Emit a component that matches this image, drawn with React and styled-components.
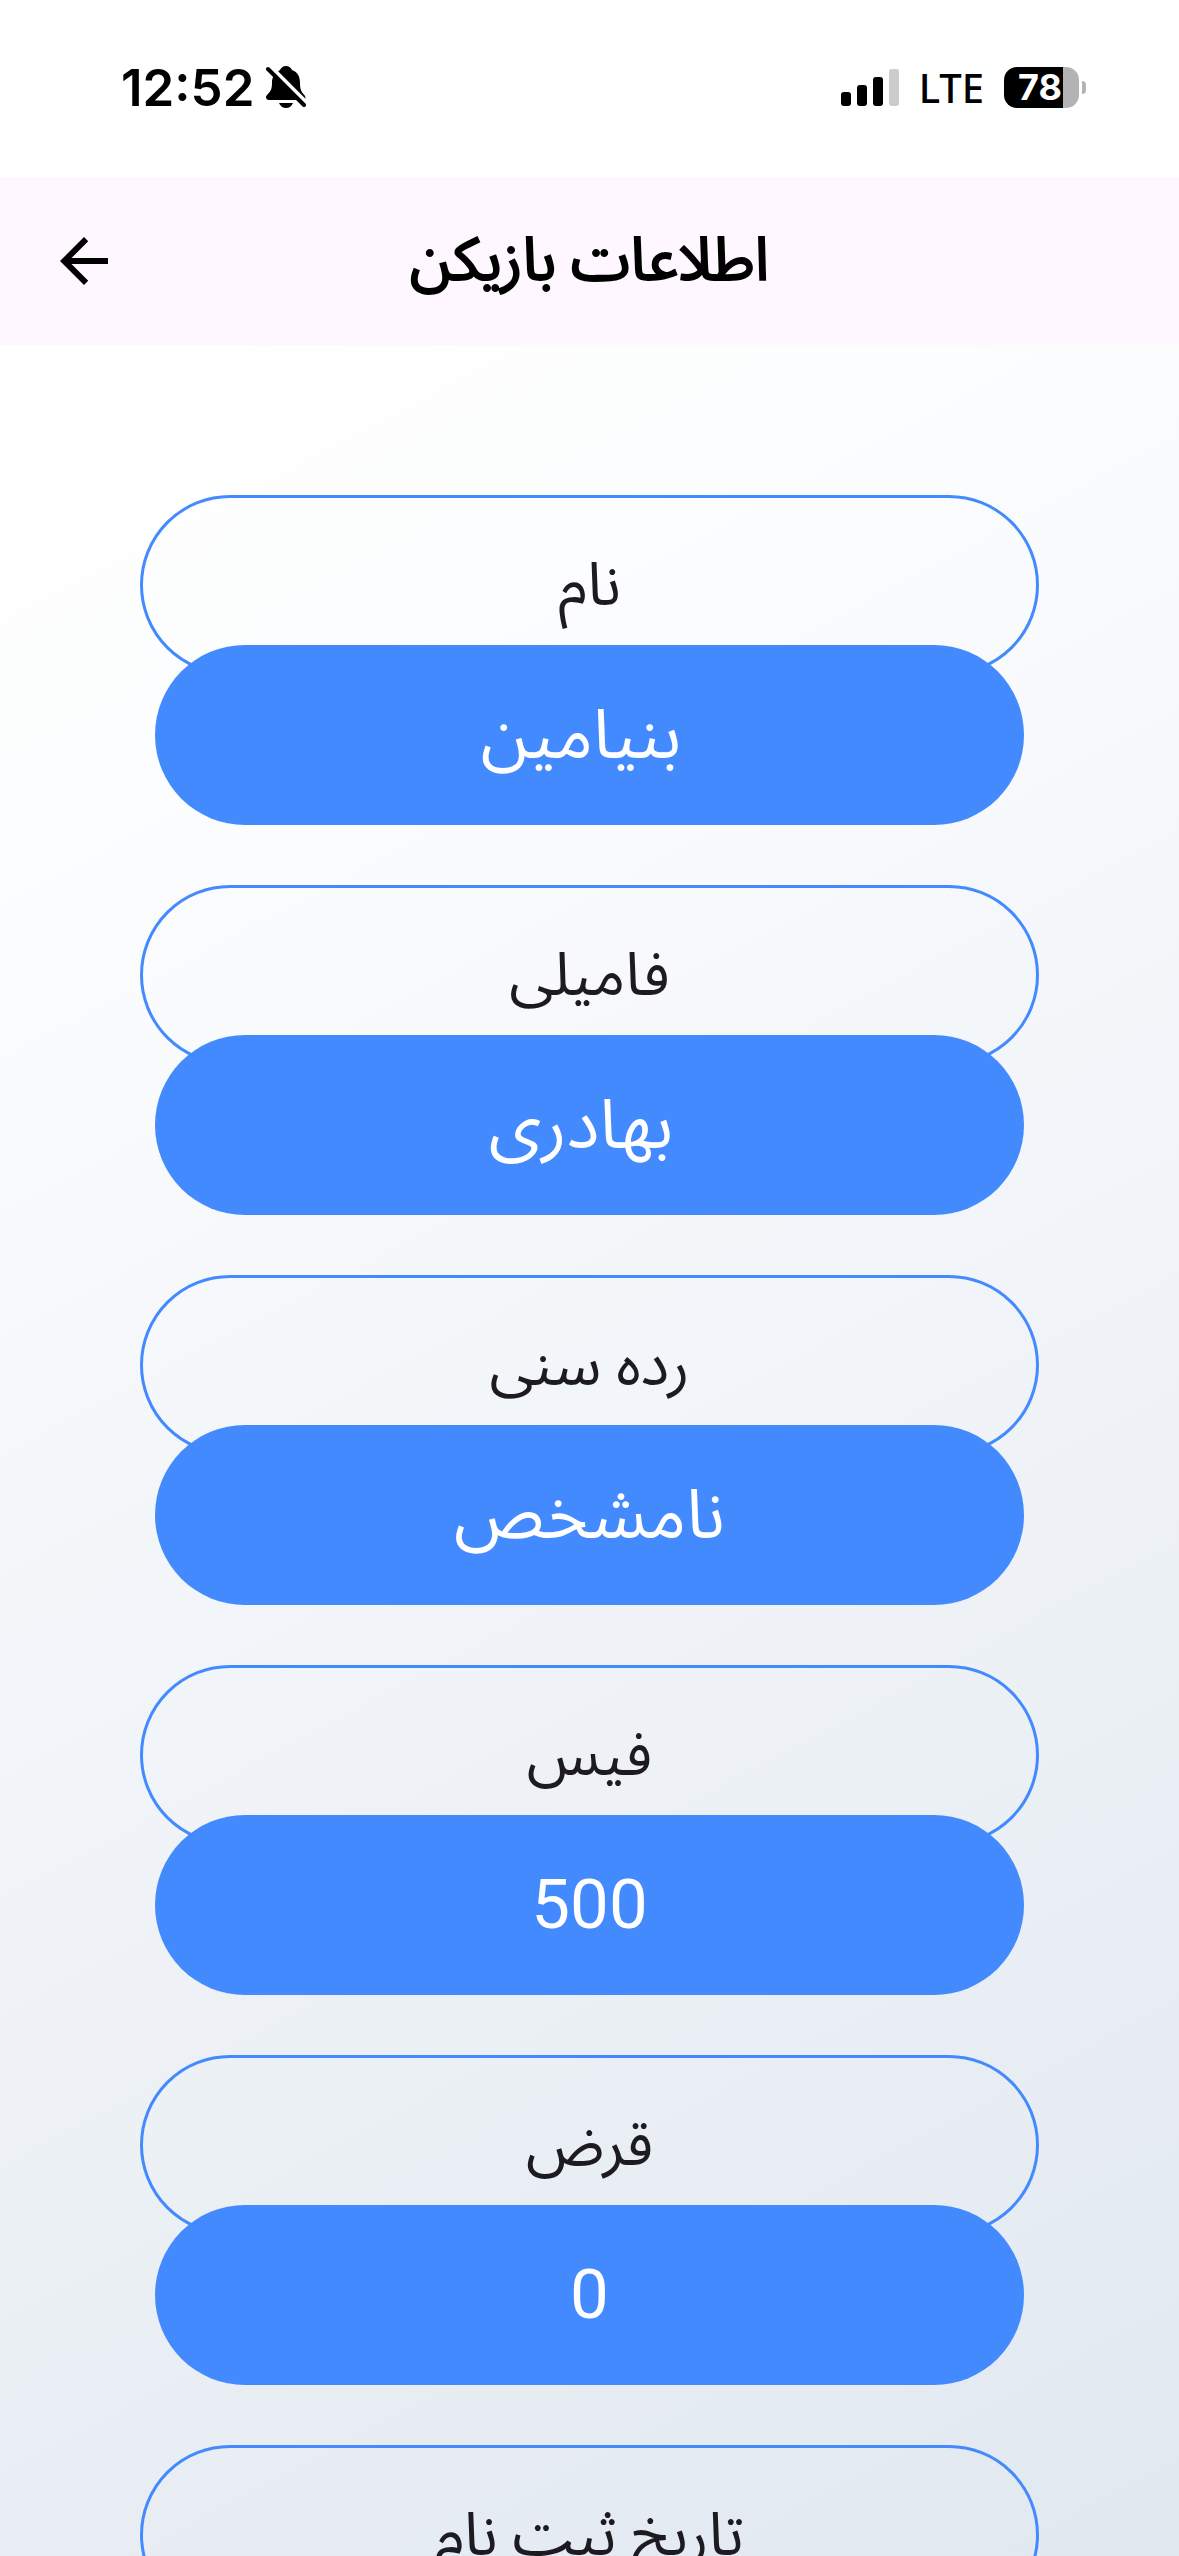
import styled, { createGlobalStyle } from "styled-components";

const fields = [
  { label: "نام", value: " بنیامین" },
  { label: "فامیلی", value: " بهادری" },
  { label: "رده سنی", value: "نامشخص" },
  { label: "فیس", value: "500" },
  { label: "قرض", value: "0" },
  { label: "تاریخ ثبت نام", value: "" },
];

const GlobalStyle = createGlobalStyle`
  * {
    box-sizing: border-box;
  }
  html, body, #root {
    height: 100%;
    margin: 0;
  }
  body {
    font-family: Roboto, "Noto Sans Arabic", "DejaVu Sans", sans-serif;
    background-color: #ffffff;
  }
`;

const BellOff = () => (
  <svg width="40" height="43" viewBox="0 0 40 43" aria-label="silent">
    <path
      d="M20 0c3 0 5 2 6 4 6 2 8 7 8 13 0 8 2 9 5 13 1 3 0 4-2 4H3c-3 0-4-3-2-5 4-4 5-6 5-13C6 11 9 7 14 4c1-2 3-4 6-4z"
      fill="#000"
    />
    <path d="M13 37h14c-1 3-4 5-7 5s-6-2-7-5z" fill="#000" />
    <path d="M4 0l38 38" stroke="#fff" strokeWidth="4" />
    <path d="M2 3l36 36" stroke="#000" strokeWidth="4" strokeLinecap="round" />
  </svg>
);

const Signal = () => (
  <svg width="58" height="38" viewBox="0 0 58 38" aria-label="signal">
    <rect x="0" y="23" width="10" height="14" rx="3" />
    <rect x="16" y="16" width="10" height="21" rx="3" />
    <rect x="32" y="8" width="10" height="29" rx="3" />
    <rect x="48" y="0" width="10" height="37" rx="3" fill="#cccccc" />
  </svg>
);

const ArrowBack = () => (
  <svg width="72" height="72" viewBox="0 0 24 24" aria-hidden="true">
    <path d="M20 11H7.83l5.59-5.59L12 4l-8 8 8 8 1.41-1.41L7.83 13H20v-2z" />
  </svg>
);

export default function App() {
  return (
    <Screen>
      <GlobalStyle />
      <StatusBar>
        <StatusGroup $gap={12}>
          <Clock>12:52</Clock>
          <BellOff />
        </StatusGroup>
        <StatusGroup $gap={20}>
          <Signal />
          <Network>LTE</Network>
          <BatteryWrapper>
            <Battery>78</Battery>
            <BatteryTip />
          </BatteryWrapper>
        </StatusGroup>
      </StatusBar>
      <AppBar>
        <BackButton type="button" aria-label="بازگشت">
          <ArrowBack />
        </BackButton>
        <Title dir="rtl">اطلاعات بازیکن</Title>
      </AppBar>
      <Content dir="rtl">
        {fields.map(({ label, value }) => (
          <Field key={label}>
            <FieldLabel>{label}</FieldLabel>
            <FieldValue>{value}</FieldValue>
          </Field>
        ))}
      </Content>
    </Screen>
  );
}

const Screen = styled.div`
  display: flex;
  flex-direction: column;
  height: 100vh;
`;

const StatusBar = styled.div`
  display: flex;
  justify-content: space-between;
  align-items: center;
  flex: none;
  height: 177px;
  padding: 0 93px 2px 121px;
  font-family: Inter, sans-serif;
`;

const StatusGroup = styled.div`
  display: flex;
  align-items: center;
  gap: ${({ $gap }) => $gap}px;
`;

const Clock = styled.span`
  font-size: 51px;
  font-weight: 600;
`;

const Network = styled.span`
  font-family: "Noto Sans", sans-serif;
  font-size: 40px;
  font-weight: 500;
  line-height: 48px;
`;

const BatteryWrapper = styled.div`
  display: flex;
  align-items: center;
  gap: 3px;
`;

const Battery = styled.div`
  width: 75px;
  height: 41px;
  padding-right: 3px;
  border-radius: 13px;
  background: linear-gradient(to right, #000 59px, #b3b3b3 59px);
  color: #fff;
  font-size: 36px;
  font-weight: 700;
  line-height: 41px;
  text-align: center;
`;

const BatteryTip = styled.div`
  width: 4px;
  height: 13px;
  border-radius: 0 4px 4px 0;
  background-color: #b3b3b3;
`;

const AppBar = styled.header`
  display: grid;
  grid-template-columns: 168px 1fr 168px;
  align-items: center;
  flex: none;
  height: 168px;
  background-color: #fef7ff;
`;

const BackButton = styled.button`
  display: flex;
  justify-content: center;
  align-items: center;
  width: 168px;
  height: 168px;
  padding: 0;
  border: none;
  background: none;
  cursor: pointer;
`;

/* regular outlines thickened by a stroke, narrower than the real bold */
const Title = styled.h1`
  margin: 0;
  padding-bottom: 2px;
  color: #000;
  font-size: 60px;
  font-weight: 400;
  line-height: 80px;
  text-align: center;
  -webkit-text-stroke: 2px #000;
`;

const Content = styled.main`
  display: flex;
  flex-direction: column;
  gap: 60px;
  flex: 1;
  min-height: 0;
  overflow-y: auto;
  scrollbar-width: none;
  padding: 150px 140px;
  background: linear-gradient(152deg, #ffffff, #fcfdfe 18%, #e1e8f0);
`;

const Field = styled.div`
  display: flex;
  flex-direction: column;
  flex: none;
`;

const FieldLabel = styled.div`
  height: 180px;
  border: 3px solid #448aff;
  border-radius: 90px;
  color: #1d1b20;
  font-size: 60px;
  line-height: 174px;
  text-align: center;
`;

const FieldValue = styled.div`
  height: 180px;
  margin: -30px 15px 0;
  border-radius: 90px;
  background-color: #448aff;
  color: #fff;
  font-size: 69px;
  line-height: 180px;
  text-align: center;
  white-space: pre;
`;
